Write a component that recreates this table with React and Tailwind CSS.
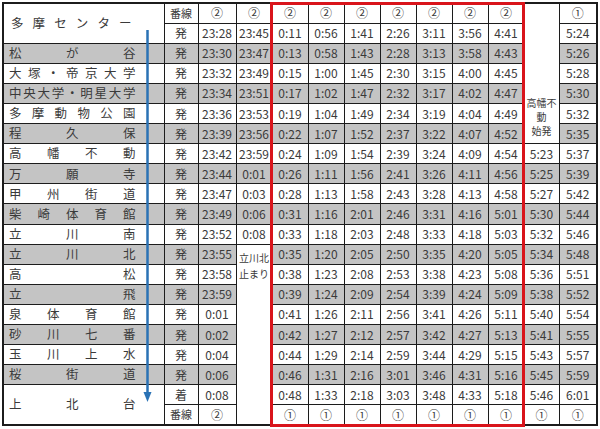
const rows = [
  { name: '多摩センター', dir: '発', t: ['23:28', '23:45', '0:11', '0:56', '1:41', '2:26', '3:11', '3:56', '4:41', null, '5:24'] },
  { name: '松が谷', dir: '発', t: ['23:30', '23:47', '0:13', '0:58', '1:43', '2:28', '3:13', '3:58', '4:43', null, '5:26'] },
  { name: '大塚・帝京大学', dir: '発', t: ['23:32', '23:49', '0:15', '1:00', '1:45', '2:30', '3:15', '4:00', '4:45', null, '5:28'] },
  { name: '中央大学・明星大学', dir: '発', t: ['23:34', '23:51', '0:17', '1:02', '1:47', '2:32', '3:17', '4:02', '4:47', null, '5:30'] },
  { name: '多摩動物公園', dir: '発', t: ['23:36', '23:53', '0:19', '1:04', '1:49', '2:34', '3:19', '4:04', '4:49', null, '5:32'] },
  { name: '程久保', dir: '発', t: ['23:39', '23:56', '0:22', '1:07', '1:52', '2:37', '3:22', '4:07', '4:52', null, '5:35'] },
  { name: '高幡不動', dir: '発', t: ['23:42', '23:59', '0:24', '1:09', '1:54', '2:39', '3:24', '4:09', '4:54', '5:23', '5:37'] },
  { name: '万願寺', dir: '発', t: ['23:44', '0:01', '0:26', '1:11', '1:56', '2:41', '3:26', '4:11', '4:56', '5:25', '5:39'] },
  { name: '甲州街道', dir: '発', t: ['23:47', '0:03', '0:28', '1:13', '1:58', '2:43', '3:28', '4:13', '4:58', '5:27', '5:42'] },
  { name: '柴崎体育館', dir: '発', t: ['23:49', '0:06', '0:31', '1:16', '2:01', '2:46', '3:31', '4:16', '5:01', '5:30', '5:44'] },
  { name: '立川南', dir: '発', t: ['23:52', '0:08', '0:33', '1:18', '2:03', '2:48', '3:33', '4:18', '5:03', '5:32', '5:46'] },
  { name: '立川北', dir: '発', t: ['23:55', 'stop', '0:35', '1:20', '2:05', '2:50', '3:35', '4:20', '5:05', '5:34', '5:48'] },
  { name: '高松', dir: '発', t: ['23:58', null, '0:38', '1:23', '2:08', '2:53', '3:38', '4:23', '5:08', '5:36', '5:51'] },
  { name: '立飛', dir: '発', t: ['23:59', null, '0:39', '1:24', '2:09', '2:54', '3:39', '4:24', '5:09', '5:38', '5:52'] },
  { name: '泉体育館', dir: '発', t: ['0:01', null, '0:41', '1:26', '2:11', '2:56', '3:41', '4:26', '5:11', '5:40', '5:54'] },
  { name: '砂川七番', dir: '発', t: ['0:02', null, '0:42', '1:27', '2:12', '2:57', '3:42', '4:27', '5:13', '5:41', '5:55'] },
  { name: '玉川上水', dir: '発', t: ['0:04', null, '0:44', '1:29', '2:14', '2:59', '3:44', '4:29', '5:15', '5:43', '5:57'] },
  { name: '桜街道', dir: '発', t: ['0:06', null, '0:46', '1:31', '2:16', '3:01', '3:46', '4:31', '5:16', '5:45', '5:59'] },
  { name: '上北台', dir: '着', t: ['0:08', null, '0:48', '1:33', '2:18', '3:03', '3:48', '4:33', '5:18', '5:46', '6:01'] },
]

const base = 'border border-[#1c1c1c] p-0 h-[20.1px] text-center'
const cell = `${base} align-middle`

// letters spread over the cell width, like Excel "distributed"
const Spread = ({ text }) => (
  <div className="flex justify-between pl-[5px] pr-[28px] text-[12.5px]">
    {[...text].map((ch, i) => (
      <span key={i}>{ch}</span>
    ))}
  </div>
)

export default function App() {
  return (
    <div
      className="relative w-[600px] h-[429px] bg-white text-[#3a3a3a] text-[12px] leading-none"
      style={{ fontFamily: '"Noto Sans CJK JP", "Noto Sans", sans-serif' }}
    >
      <div className="pt-[2px] pl-[2px]">
        <table className="border-collapse table-fixed w-[594px] border-2 border-[#1c1c1c]">
          <colgroup>
            <col className="w-[161px]" />
            <col className="w-[34px]" />
            <col className="w-[38px]" />
            <col className="w-[36px]" />
            {[0, 1, 2, 3, 4, 5, 6].map((i) => (
              <col key={i} className="w-[36px]" />
            ))}
            <col className="w-[35px]" />
            <col className="w-[38px]" />
          </colgroup>
          <tbody>
            {/* header: 番線 */}
            <tr>
              <td rowSpan={2} className={`${cell} text-left`}>
                <div className="flex justify-between pl-[7px] pr-[32px] text-[12.5px]">
                  {[...'多摩センター'].map((ch, i) => (
                    <span key={i}>{ch}</span>
                  ))}
                </div>
              </td>
              <td className={`${cell} text-[11px]`}>番線</td>
              {[0, 1, 2, 3, 4, 5, 6, 7, 8].map((i) => (
                <td key={i} className={cell}>②</td>
              ))}
              <td rowSpan={7} className={`${base} align-bottom`}>
                <div className="flex flex-col items-center gap-[4px] pb-[7px] text-[10px]">
                  <span>高幡不</span>
                  <span>動</span>
                  <span>始発</span>
                </div>
              </td>
              <td className={cell}>①</td>
            </tr>

            {rows.map((r, ri) => {
              const gray = ri % 2 === 1
              const bg = gray ? 'bg-[#c4c4c4]' : 'bg-white'
              const last = ri === rows.length - 1
              return (
                <tr key={r.name}>
                  {ri > 0 && (
                    <td rowSpan={last ? 2 : 1} className={`${cell} ${bg} text-left`}>
                      <Spread text={r.name} />
                    </td>
                  )}
                  <td className={`${cell} ${bg}`}>{r.dir}</td>
                  {r.t.map((v, ci) => {
                    if (v === null) return null
                    if (v === 'stop')
                      return (
                        <td key={ci} rowSpan={9} className={`${base} bg-white align-top`}>
                          <div className="flex flex-col items-center gap-[6px] pt-[8px] text-[10px]">
                            <span>立川北</span>
                            <span>止まり</span>
                          </div>
                        </td>
                      )
                    return (
                      <td key={ci} className={`${cell} ${bg}`}>
                        {v}
                      </td>
                    )
                  })}
                </tr>
              )
            })}

            {/* footer: 番線 */}
            <tr>
              <td className={`${cell} text-[11px]`}>番線</td>
              <td className={cell}>②</td>
              {[0, 1, 2, 3, 4, 5, 6, 7, 8].map((i) => (
                <td key={i} className={cell}>①</td>
              ))}
            </tr>
          </tbody>
        </table>
      </div>

      {/* red frame over the night columns */}
      <div className="absolute left-[270px] top-[2px] w-[255px] h-[425px] border-[3px] border-[#d9141b] pointer-events-none" />

      {/* direction arrow */}
      <svg className="absolute left-[143px] top-[28px]" width="9" height="376" viewBox="0 0 9 376">
        <line x1="4.5" y1="2" x2="4.5" y2="366" stroke="#2a72b5" strokeWidth="2.5" />
        <polygon points="0.5,364 8.5,364 4.5,374" fill="#2a72b5" />
      </svg>
    </div>
  )
}
